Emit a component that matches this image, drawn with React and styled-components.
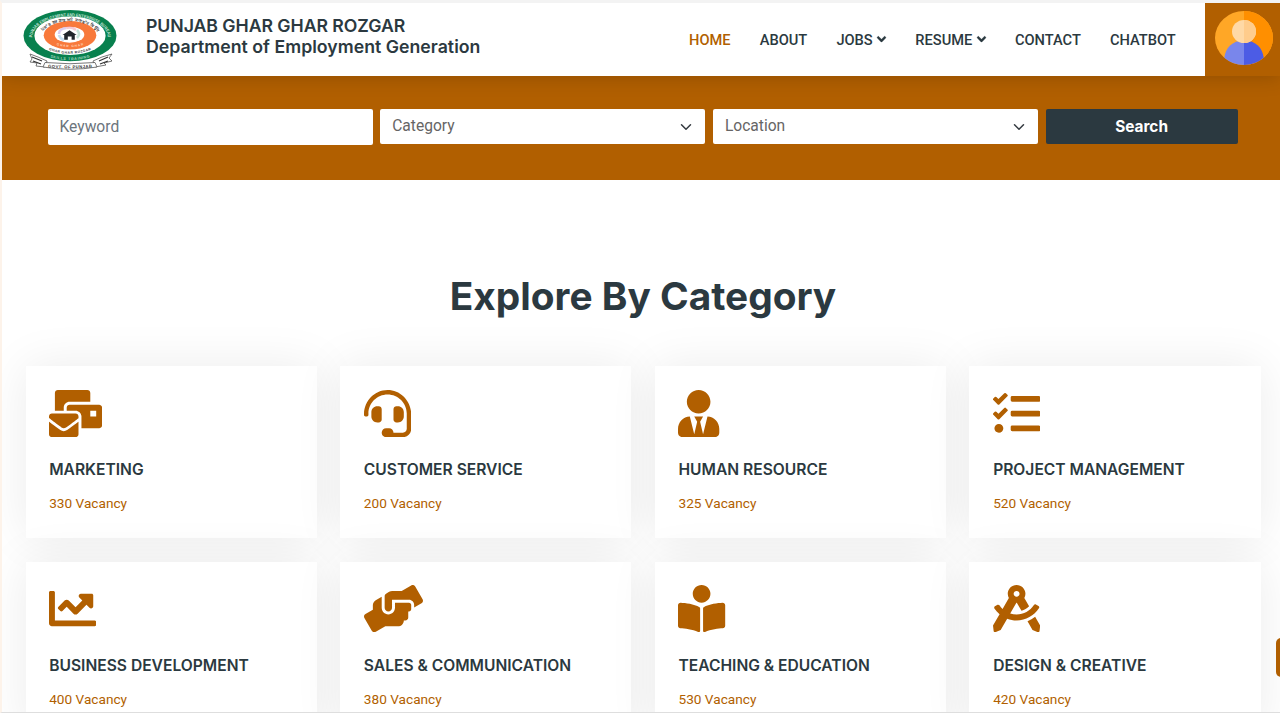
import React from "react";
import styled, { createGlobalStyle } from "styled-components";
import {
  FaMailBulk,
  FaHeadset,
  FaUserTie,
  FaTasks,
  FaChartLine,
  FaHandsHelping,
  FaBookReader,
  FaDraftingCompass,
  FaAngleDown,
} from "react-icons/fa";

const brand = "#b15f00";
const dark = "#2b3940";
const body = '"Roboto", "Liberation Sans", sans-serif';
const heading = '"Inter", "Liberation Sans", sans-serif';

const GlobalStyle = createGlobalStyle`
  *, *::before, *::after { box-sizing: border-box; }
  html, body { margin: 0; padding: 0; overflow: hidden; }
  body { background: #fff; font-family: ${body}; color: #666565; }
  h1, h2, h3, p { margin: 0; }
`;

const Page = styled.div`
  height: 713px;
  overflow: hidden;
  border-top: 3px solid #f3f3f3;
  border-left: 2px solid #fdf3ea;
  border-bottom: 1px solid #dedede;
`;

const Header = styled.header`
  position: relative;
  z-index: 1;
  display: flex;
  height: 73px;
  background: #fff;
  box-shadow: 0 2px 18px rgba(0, 0, 0, 0.17);
`;

const Brand = styled.div`
  display: flex;
  flex: 1;
  padding: 5px 0 0 20px;
`;

const Seal = styled.svg`
  width: 96px;
  height: 63px;
  flex: none;
`;

const Organisation = styled.h1`
  margin: 7px 0 0 28px;
  font: 600 17.7px/21px ${heading};
  color: ${dark};
  white-space: nowrap;
`;

const OrganisationLine = styled.span`
  display: block;
  letter-spacing: ${(p) => p.$tracking || "0"};
`;

const Nav = styled.nav`
  display: flex;
  align-items: center;
  gap: 29.1px;
  margin-right: 29.3px;
`;

const NavLink = styled.a`
  display: flex;
  align-items: center;
  gap: 4.5px;
  font-size: 14.65px;
  line-height: 22px;
  font-weight: 500;
  color: ${(p) => (p.$active ? brand : dark)};
  svg { width: 9px; height: 14.4px; stroke: currentColor; stroke-width: 8px; overflow: visible; }
`;

const AvatarPanel = styled.div`
  display: flex;
  align-items: flex-start;
  width: 75px;
  padding: 8px 0 0 10px;
  background: ${brand};
  svg { width: 58px; height: 54px; }
`;

const SearchBar = styled.form`
  display: grid;
  grid-template-columns: repeat(3, 325.3px) 192px;
  column-gap: 7.4px;
  align-items: start;
  height: 103.5px;
  padding: 33px 0 0 45.5px;
  background: ${brand};
`;

const Field = styled.div`
  display: flex;
  align-items: center;
  justify-content: space-between;
  height: ${(p) => (p.$tall ? "36.3px" : "35px")};
  padding: 0 12px;
  border-radius: 2px;
  background: #fff;
  font-size: 15.6px;
  line-height: 24px;
  color: ${(p) => (p.$tall ? "#6c757d" : "#666565")};
  padding-bottom: ${(p) => (p.$tall ? "0" : "2px")};
  svg { width: 12px; height: 12px; margin: 2px 1px 0 0; }
`;

const SearchButton = styled.button`
  height: 35px;
  padding: 0;
  border: 0;
  border-radius: 2px;
  background: ${dark};
  color: #fff;
  font: 700 15.4px/24px ${heading};
`;

const Categories = styled.main`
  padding: 92.5px 19.5px 0 23.5px;
`;

const SectionTitle = styled.h2`
  font: 700 38.8px/47px ${heading};
  color: ${dark};
  text-align: center;
  margin-bottom: 47px;
`;

const CardGrid = styled.div`
  display: grid;
  grid-template-columns: repeat(4, 1fr);
  gap: 23.6px;
`;

const Card = styled.article`
  height: 172.2px;
  padding: 23.5px 23.7px;
  background: #fff;
  box-shadow: 0 0 45px rgba(0, 0, 0, 0.08);
`;

const CardIcon = styled.div`
  height: 47.2px;
  color: ${brand};
  svg { display: block; height: 47.2px; width: ${(p) => p.$width}px; }
`;

const CardTitle = styled.h3`
  margin-top: 23.3px;
  font: 600 15.6px/19px ${heading};
  color: ${dark};
  white-space: nowrap;
`;

const Vacancy = styled.p`
  margin-top: 12.1px;
  font-size: 13.65px;
  line-height: 24px;
  color: ${brand};
`;

const BackToTop = styled.div`
  position: fixed;
  left: 1276px;
  top: 638px;
  width: 40px;
  height: 39px;
  border-radius: 5px;
  background: ${brand};
`;

const categories = [
  ["MARKETING", 330, FaMailBulk, 53.1],
  ["CUSTOMER SERVICE", 200, FaHeadset, 47.2],
  ["HUMAN RESOURCE", 325, FaUserTie, 41.3],
  ["PROJECT MANAGEMENT", 520, FaTasks, 47.2],
  ["BUSINESS DEVELOPMENT", 400, FaChartLine, 47.2],
  ["SALES & COMMUNICATION", 380, FaHandsHelping, 59],
  ["TEACHING & EDUCATION", 530, FaBookReader, 47.2],
  ["DESIGN & CREATIVE", 420, FaDraftingCompass, 47.2],
];

const navItems = [
  { label: "HOME", active: true },
  { label: "ABOUT" },
  { label: "JOBS", menu: true },
  { label: "RESUME", menu: true },
  { label: "CONTACT" },
  { label: "CHATBOT" },
];

function GovernmentSeal() {
  return (
    <Seal viewBox="22 8 96 63">
      <defs>
        <path id="ringTop" d="M32.2 37.5 A37.8 21 0 0 1 107.8 37.5" />
        <path id="ringBottom" d="M40 52.9 A42 24.1 0 0 0 100 52.9" />
        <path id="innerTop" d="M41 36.5 A29 15.2 0 0 1 99 36.5" />
        <path id="innerBottom" d="M44 47 A33 17.6 0 0 0 96 47" />
        <path id="orangeBottom" d="M54 44 A24 12.3 0 0 0 86 44" />
        <path id="banner" d="M45 67.2 Q70 69.6 95 67.2" />
      </defs>
      <g fill="#fff" stroke="#555" strokeWidth=".8">
        <path d="M30 54l8 3 9 4-2 6-9-1 1-3-7-1 2-3z" />
        <path d="M112 54l-10 3-9 4 2 6 11-2-2-2 8-2-3-3z" />
        <path d="M45 62.5Q70 65 95 62.5l2 4.5Q70 71.5 43 67z" />
      </g>
      <path d="M32 57l10 4m-9 0l8 3M108 57l-9 4m9 0l-8 3" stroke="#333" strokeWidth="1.3" />
      <ellipse cx="70" cy="35.7" rx="46.5" ry="25.6" fill="#08804e" />
      <ellipse cx="70" cy="35.7" rx="35.6" ry="19.3" fill="#fff" />
      <ellipse cx="70" cy="35.3" rx="26.3" ry="14.2" fill="#f8793b" />
      <ellipse cx="69.5" cy="34.7" rx="14.8" ry="8" fill="#fff" />
      <g fill="none" strokeWidth="2.6" opacity=".4">
        <path d="M59 34q0-5 7-6" stroke="#a58ade" />
        <path d="M66 28q5-2 10 2" stroke="#e87b91" />
        <path d="M77 30q4 4 0 8" stroke="#6fb9a2" />
        <path d="M59 35q1 4 5 5" stroke="#72add8" />
      </g>
      <path d="M62.5 35l7-4.8 7.2 4.8h-1.9v4.7h-3.2v-3.2h-3.8v3.2h-3.6V35z" fill="#20252b" />
      <g fontFamily="Liberation Sans, sans-serif" fontWeight="700" textAnchor="middle">
        <text fontSize="4.6" fill="#c4e4d5"><textPath href="#ringTop" startOffset="50%" textLength="94" lengthAdjust="spacingAndGlyphs">PUNJAB EMPLOYMENT AND ENTERPRISE BUREAU</textPath></text>
        <text fontSize="3.8" fill="#a5d8c1"><textPath href="#ringBottom" startOffset="50%" textLength="40">SKILLS TRAINING</textPath></text>
        <text fontSize="4" fill="#343434" fontFamily="Noto Sans, sans-serif"><textPath href="#innerTop" startOffset="50%" textLength="60">ਪੰਜਾਬ ਰੋਜ਼ਗਾਰ ਅਤੇ ਕਾਰੋਬਾਰ ਬਿਊਰੋ</textPath></text>
        <text fontSize="3.5" fill="#3b3b3b"><textPath href="#innerBottom" startOffset="50%" textLength="43">GHAR GHAR ROZGAR</textPath></text>
        <text fontSize="3.2" fill="#ffd5b8"><textPath href="#orangeBottom" startOffset="50%" textLength="27">GHAR GHAR</textPath></text>
        <text fontSize="4.2" fill="#333"><textPath href="#banner" startOffset="50%" textLength="44">GOVT. OF PUNJAB</textPath></text>
      </g>
    </Seal>
  );
}

function Avatar() {
  return (
    <svg viewBox="0 0 58 54">
      <ellipse cx="29" cy="27" rx="29" ry="27" fill="#ffa726" />
      <path d="M29 0A29 27 0 0 1 29 54Z" fill="#ff8f00" />
      <path d="M29 29.5C17 29.5 10.5 37 9.3 46.8A29 27 0 0 0 29 54Z" fill="#7986eb" />
      <path d="M29 29.5C41 29.5 47.5 37 48.7 46.8A29 27 0 0 1 29 54Z" fill="#4c5ce5" />
      <ellipse cx="29" cy="20.5" rx="12" ry="11.5" fill="#ffd9a6" />
      <path d="M29 9A12 11.5 0 0 1 29 32Z" fill="#ffcc8c" />
    </svg>
  );
}

function SelectArrow() {
  return (
    <svg viewBox="0 0 16 16" fill="none" stroke="#343a40" strokeWidth="2" strokeLinecap="round" strokeLinejoin="round">
      <path d="m2 5 6 6 6-6" />
    </svg>
  );
}

export default function App() {
  return (
    <Page>
      <GlobalStyle />
      <Header>
        <Brand>
          <GovernmentSeal />
          <Organisation>
            <OrganisationLine $tracking="-0.06px">PUNJAB GHAR GHAR ROZGAR</OrganisationLine>
            <OrganisationLine $tracking="0.02px">Department of Employment Generation</OrganisationLine>
          </Organisation>
        </Brand>
        <Nav>
          {navItems.map((item) => (
            <NavLink key={item.label} $active={item.active}>
              {item.label}
              {item.menu && <FaAngleDown />}
            </NavLink>
          ))}
        </Nav>
        <AvatarPanel>
          <Avatar />
        </AvatarPanel>
      </Header>
      <SearchBar>
        <Field $tall>Keyword</Field>
        <Field>Category<SelectArrow /></Field>
        <Field>Location<SelectArrow /></Field>
        <SearchButton type="button">Search</SearchButton>
      </SearchBar>
      <Categories>
        <SectionTitle>Explore By Category</SectionTitle>
        <CardGrid>
          {categories.map(([title, count, Icon, iconWidth]) => (
            <Card key={title}>
              <CardIcon $width={iconWidth}><Icon /></CardIcon>
              <CardTitle>{title}</CardTitle>
              <Vacancy>{count} Vacancy</Vacancy>
            </Card>
          ))}
        </CardGrid>
      </Categories>
      <BackToTop />
    </Page>
  );
}
